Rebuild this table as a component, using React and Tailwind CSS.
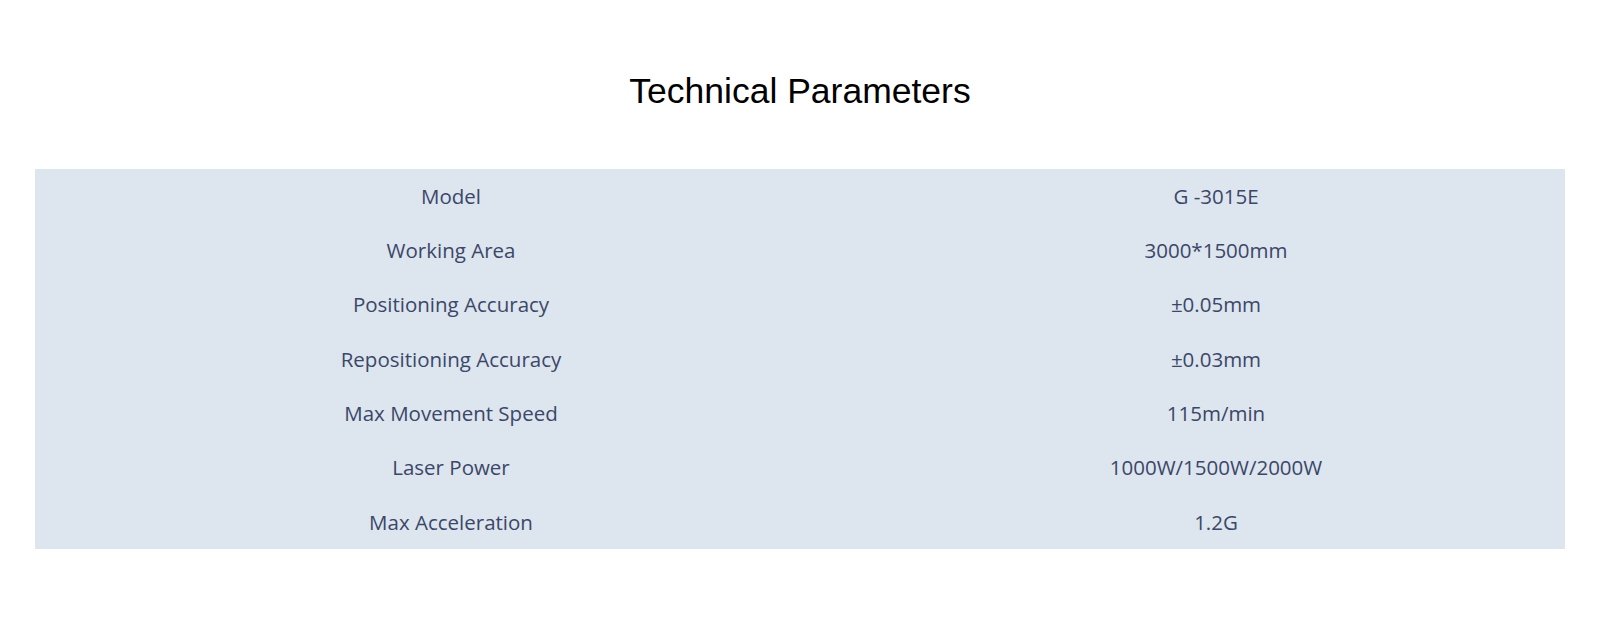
const rows = [
  ['Model', 'G -3015E'],
  ['Working Area', '3000*1500mm'],
  ['Positioning Accuracy', '±0.05mm'],
  ['Repositioning Accuracy', '±0.03mm'],
  ['Max Movement Speed', '115m/min'],
  ['Laser Power', '1000W/1500W/2000W'],
  ['Max Acceleration', '1.2G'],
]

export default function App() {
  return (
    <div className="min-h-[642px] w-full bg-white">
      <div className="px-[35px] pt-[71px] pb-[92px]">
        <h2 className="text-center font-['Liberation_Sans',Arial,sans-serif] text-[35.5px] leading-[40px] text-black">
          Technical Parameters
        </h2>
        <div className="mt-[58px] bg-[#dde5ee] font-['Open_Sans',sans-serif] text-[20.5px] text-[#3b4769]">
          {rows.map(([label, value]) => (
            <div key={label} className="grid h-[54.3px] grid-cols-[832px_1fr] items-center">
              <div className="text-center">{label}</div>
              <div className="text-center">{value}</div>
            </div>
          ))}
        </div>
      </div>
    </div>
  )
}
